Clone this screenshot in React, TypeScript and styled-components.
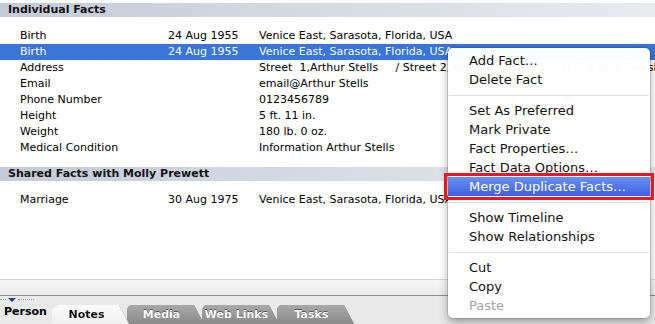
import React from 'react';
import styled, { createGlobalStyle } from 'styled-components';

const GlobalStyle = createGlobalStyle`
  html, body {
    margin: 0;
    padding: 0;
    background: #fff;
  }
  body {
    font-family: "DejaVu Sans", "Liberation Sans", sans-serif;
    font-size: 11px;
    color: #000;
  }
`;

const Window = styled.div`
  width: 655px;
  height: 324px;
  position: relative;
  overflow: hidden;
  display: flex;
  flex-direction: column;
  background: #fff;
`;

const FactsPane = styled.div`
  flex: 1;
  padding-top: 3px;
  background: #fff;
  border-bottom: 1px solid #d6d6d6;
`;

const SectionHeader = styled.div`
  height: 14px;
  line-height: 14px;
  padding-left: 8px;
  font-weight: bold;
  font-size: 11px;
  color: #111;
  background: linear-gradient(to right, #c4cbd7, #d6dbe3 50%, #e8eaee);
`;

const RowList = styled.div`
  margin: 11px 0;
`;

const Row = styled.div<{ $selected?: boolean }>`
  display: grid;
  grid-template-columns: 148px 91px 1fr;
  height: 16px;
  line-height: 16px;
  padding-left: 20px;
  white-space: pre;
  overflow: hidden;
  background: ${p => (p.$selected ? '#3a75d8' : 'transparent')};
  color: ${p => (p.$selected ? '#fff' : '#000')};
`;

const Cell = styled.span`
  overflow: hidden;
`;

const Splitter = styled.div`
  height: 15px;
  background: linear-gradient(#f6f6f6, #ececec);
  border-bottom: 1px solid #8c8c8c;
`;

const TabBar = styled.div`
  height: 28px;
  background: #e9e9e9;
  position: relative;
  display: flex;
  align-items: flex-end;
`;

const Grip = styled.div`
  position: absolute;
  left: 0;
  top: 1px;
  display: flex;
  align-items: center;
  gap: 2px;
  height: 5px;
`;

const Dots = styled.span<{ $w: number }>`
  width: ${p => p.$w}px;
  border-top: 1px dotted #9aa;
`;

const Triangle = styled.span`
  width: 0;
  height: 0;
  border-left: 4px solid transparent;
  border-right: 4px solid transparent;
  border-top: 4px solid #2a4466;
`;

const PersonLabel = styled.div`
  flex: 0 0 52px;
  box-sizing: border-box;
  font-weight: bold;
  font-size: 11px;
  padding: 0 0 4px 4px;
  line-height: 16px;
`;

const Tabs = styled.div`
  display: flex;
  align-items: flex-end;
  filter: drop-shadow(0 0 0.6px #6d6d6d);
`;

const Tab = styled.div<{ $active?: boolean }>`
  position: relative;
  z-index: ${p => (p.$active ? 2 : 1)};
  box-sizing: border-box;
  width: 77px;
  height: 19px;
  margin-right: -2px;
  padding-right: 8px;
  line-height: 20px;
  text-align: center;
  font-weight: bold;
  font-size: 11px;
  clip-path: polygon(0 100%, 0 4px, 2px 1px, 5px 0, calc(100% - 10px) 0, 100% 100%);
  background: ${p =>
    p.$active ? 'linear-gradient(#fbfbfb, #efefef)' : 'linear-gradient(#a8a8a8, #8a8a8a)'};
  color: ${p => (p.$active ? '#111' : '#fff')};
  text-shadow: ${p => (p.$active ? 'none' : '0 -1px 0 #555')};
`;

const Menu = styled.div`
  position: absolute;
  left: 448px;
  top: 48px;
  width: 202px;
  padding: 3px 0;
  background: rgba(255, 255, 255, 0.975);
  border-radius: 5px;
  box-shadow: 0 4px 10px rgba(0, 0, 0, 0.35), 0 0 0 1px rgba(0, 0, 0, 0.12);
  font-size: 13px;
  z-index: 5;
`;

const MenuItem = styled.div<{ $active?: boolean; $disabled?: boolean }>`
  height: 19px;
  line-height: 19px;
  padding-left: 21px;
  white-space: nowrap;
  color: ${p => (p.$disabled ? '#a3a3a3' : p.$active ? '#fff' : '#111')};
  background: ${p => (p.$active ? 'linear-gradient(#6a8ff4, #3d61e2)' : 'transparent')};
  outline: ${p => (p.$active ? '3px solid #ea1720' : 'none')};
  outline-offset: 1px;
`;

const Separator = styled.div`
  height: 1px;
  margin: 6px 1px 5px;
  background: #dedede;
`;

type Fact = { label: string; date?: string; place: string; selected?: boolean };

const individual: Fact[] = [
  { label: 'Birth', date: '24 Aug 1955', place: 'Venice East, Sarasota, Florida, USA' },
  { label: 'Birth', date: '24 Aug 1955', place: 'Venice East, Sarasota, Florida, USA', selected: true },
  { label: 'Address', place: 'Street  1,Arthur Stells     / Street 2,Arthur Weasly / Street 3,Arthur Weasly,State' },
  { label: 'Email', place: 'email@Arthur Stells' },
  { label: 'Phone Number', place: '0123456789' },
  { label: 'Height', place: '5 ft. 11 in.' },
  { label: 'Weight', place: '180 lb. 0 oz.' },
  { label: 'Medical Condition', place: 'Information Arthur Stells' },
];

const shared: Fact[] = [
  { label: 'Marriage', date: '30 Aug 1975', place: 'Venice East, Sarasota, Florida, USA' },
];

const menu: (string | null)[] = [
  'Add Fact…', 'Delete Fact', null,
  'Set As Preferred', 'Mark Private', 'Fact Properties…', 'Fact Data Options…', 'Merge Duplicate Facts…', null,
  'Show Timeline', 'Show Relationships', null,
  'Cut', 'Copy', 'Paste',
];

function FactRows({ facts }: { facts: Fact[] }) {
  return (
    <RowList>
      {facts.map((f, i) => (
        <Row key={i} $selected={f.selected}>
          <Cell>{f.label}</Cell>
          <Cell>{f.date ?? ''}</Cell>
          <Cell>{f.place}</Cell>
        </Row>
      ))}
    </RowList>
  );
}

export default function App() {
  return (
    <Window>
      <GlobalStyle />
      <FactsPane>
        <SectionHeader>Individual Facts</SectionHeader>
        <FactRows facts={individual} />
        <SectionHeader>Shared Facts with Molly Prewett</SectionHeader>
        <FactRows facts={shared} />
      </FactsPane>
      <Splitter />
      <TabBar>
        <Grip>
          <Dots $w={6} />
          <Triangle />
          <Dots $w={16} />
        </Grip>
        <PersonLabel>Person</PersonLabel>
        <Tabs>
          <Tab $active>Notes</Tab>
          <Tab>Media</Tab>
          <Tab>Web Links</Tab>
          <Tab>Tasks</Tab>
        </Tabs>
      </TabBar>
      <Menu>
        {menu.map((m, i) =>
          m === null ? (
            <Separator key={i} />
          ) : (
            <MenuItem key={i} $active={m.startsWith('Merge')} $disabled={m === 'Paste'}>
              {m}
            </MenuItem>
          )
        )}
      </Menu>
    </Window>
  );
}
